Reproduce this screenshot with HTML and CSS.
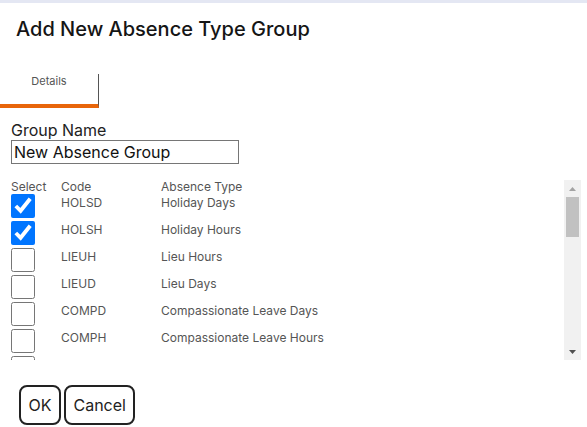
FILE: index.html
```html
<!DOCTYPE html>
<html lang="en">
<head>
<meta charset="utf-8">
<title>Add New Absence Type Group</title>
<link rel="stylesheet" href="styles.css">
</head>
<body>
<div class="topbar"></div>
<h1 class="title">Add New Absence Type Group</h1>
<div class="tabs"><div class="tab">Details</div></div>
<div class="form">
  <label class="label" for="gname">Group Name</label>
  <input id="gname" class="name-input" type="text" value="New Absence Group">
  <div class="list-wrap">
    <div class="list">
      <div class="row head"><span>Select</span><span>Code</span><span>Absence Type</span></div>
      <div class="row"><input class="cb" type="checkbox" checked><span class="cell">HOLSD</span><span class="cell">Holiday Days</span></div>
      <div class="row"><input class="cb" type="checkbox" checked><span class="cell">HOLSH</span><span class="cell">Holiday Hours</span></div>
      <div class="row"><input class="cb" type="checkbox"><span class="cell">LIEUH</span><span class="cell">Lieu Hours</span></div>
      <div class="row"><input class="cb" type="checkbox"><span class="cell">LIEUD</span><span class="cell">Lieu Days</span></div>
      <div class="row"><input class="cb" type="checkbox"><span class="cell">COMPD</span><span class="cell">Compassionate Leave Days</span></div>
      <div class="row"><input class="cb" type="checkbox"><span class="cell">COMPH</span><span class="cell">Compassionate Leave Hours</span></div>
      <div class="row"><input class="cb" type="checkbox"><span class="cell"></span><span class="cell"></span></div>
    </div>
    <div class="scrollbar">
      <div class="sb-btn"><svg width="7" height="4" viewBox="0 0 7 4"><polygon points="0,4 7,4 3.5,0" fill="#a3a3a3"/></svg></div>
      <div class="sb-thumb"></div>
      <div class="sb-track"></div>
      <div class="sb-btn"><svg width="7" height="4" viewBox="0 0 7 4"><polygon points="0,0 7,0 3.5,4" fill="#505050"/></svg></div>
    </div>
  </div>
</div>
<div class="actions">
  <button class="btn" type="button">OK</button>
  <button class="btn" type="button">Cancel</button>
</div>
</body>
</html>
```
FILE: styles.css
```css
html, body {
  margin: 0;
  padding: 0;
  background: #ffffff;
  font-family: Inter, "Liberation Sans", sans-serif;
  color: #222222;
}

.topbar {
  height: 3px;
  background: #e4e7f3;
}

.title {
  margin: 14px 0 0 0;
  padding-left: 16px;
  font-size: 20px;
  font-weight: 450;
  line-height: normal;
  color: #151515;
}

.tabs {
  margin-top: 33px;
  display: flex;
}

.tab {
  width: 98px;
  height: 30px;
  border-right: 1px solid #555555;
  border-bottom: 4px solid #e8650a;
  text-align: center;
  font-size: 11px;
  line-height: normal;
  color: #555555;
}

.form {
  padding-left: 11px;
}

.label {
  display: block;
  margin-top: 12px;
  font-size: 16px;
  line-height: normal;
  color: #222222;
}

.name-input {
  display: block;
  box-sizing: border-box;
  width: 228px;
  margin: 0;
  padding: 1px 2px;
  border: 1px solid #767676;
  border-radius: 0;
  font-family: Inter, "Liberation Sans", sans-serif;
  font-size: 16px;
  line-height: normal;
  color: #111111;
  background: #ffffff;
}

.list-wrap {
  margin-top: 16px;
  width: 570px;
  height: 180px;
  display: flex;
}

.list {
  flex: 1;
  overflow: hidden;
}

.row {
  display: grid;
  grid-template-columns: 50px 100px 1fr;
  height: 27px;
  font-size: 12px;
  line-height: 14px;
  color: #555555;
}

.row.head {
  height: 14px;
}

.cell {
  padding-top: 2px;
}

.cb {
  width: 24px;
  height: 24px;
  margin: 0;
  accent-color: #0075ff;
}

.scrollbar {
  width: 17px;
  background: #f1f1f1;
  display: flex;
  flex-direction: column;
}

.sb-btn {
  height: 17px;
  display: flex;
  align-items: center;
  justify-content: center;
}

.sb-thumb {
  height: 40px;
  margin: 0 2px;
  background: #c1c1c1;
}

.sb-track {
  flex: 1;
}

.actions {
  margin-top: 25px;
  padding-left: 19px;
  display: flex;
  gap: 3px;
}

.btn {
  margin: 0;
  padding: 8px 7.5px;
  border: 2px solid #222222;
  border-radius: 8px;
  background: #ffffff;
  font-family: Inter, "Liberation Sans", sans-serif;
  font-size: 16px;
  line-height: normal;
  color: #222222;
}
```
